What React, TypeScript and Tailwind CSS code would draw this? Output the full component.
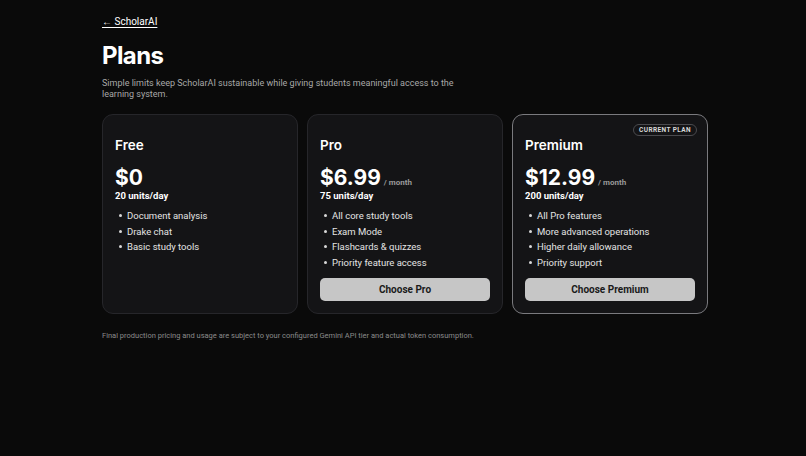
const plans = [
  {
    name: 'Free',
    price: '$0',
    period: '',
    units: '20 units/day',
    features: ['Document analysis', 'Drake chat', 'Basic study tools'],
    cta: '',
    current: false,
  },
  {
    name: 'Pro',
    price: '$6.99',
    period: '/ month',
    units: '75 units/day',
    features: ['All core study tools', 'Exam Mode', 'Flashcards & quizzes', 'Priority feature access'],
    cta: 'Choose Pro',
    current: false,
  },
  {
    name: 'Premium',
    price: '$12.99',
    period: '/ month',
    units: '200 units/day',
    features: ['All Pro features', 'More advanced operations', 'Higher daily allowance', 'Priority support'],
    cta: 'Choose Premium',
    current: true,
  },
];

function App() {
  return (
    <div className="min-h-[456px] bg-[#0a0a0a] text-white font-['Roboto',sans-serif]">
      <div className="w-[606px] ml-[102px] pt-[15px]">
        <a href="#" className="block w-fit text-[10px] leading-[13px] underline underline-offset-2">
          ← ScholarAI
        </a>
        <h1 className="mt-[13px] font-['Inter',sans-serif] text-[24px] leading-[30px] font-bold tracking-tight">Plans</h1>
        <p className="mt-[7px] w-[360px] text-[9px] leading-[11px] text-[#a8a8a8]">
          Simple limits keep ScholarAI sustainable while giving students meaningful access to the learning system.
        </p>

        <div className="mt-[14px] grid grid-cols-3 gap-[9px]">
          {plans.map((p) => (
            <div
              key={p.name}
              className={
                'relative flex flex-col h-[200px] rounded-[11px] bg-[#141416] px-[12px] pb-[12px] pt-[22px] border ' +
                (p.current ? 'border-[#7a7a7e]' : 'border-[#26262a]')
              }
            >
              {p.current && (
                <span className="absolute right-[10px] top-[9px] rounded-full border border-[#4a4a4e] px-[5px] text-[6.5px] leading-[10px] font-bold tracking-[0.06em] text-[#d8d8d8]">
                  CURRENT PLAN
                </span>
              )}
              <h2 className="font-['Inter',sans-serif] text-[13.5px] leading-[17px] font-semibold">{p.name}</h2>
              <div className="mt-[12px] flex items-baseline gap-[3px]">
                <span className="font-['Inter',sans-serif] text-[21px] leading-[24px] font-bold">{p.price}</span>
                {p.period && <span className="text-[8px] font-bold text-[#9a9a9a]">{p.period}</span>}
              </div>
              <div className="text-[9.5px] leading-[12px] font-bold">{p.units}</div>
              <ul className="mt-[6px] text-[9.5px] leading-[15.6px] text-[#e4e4e4]">
                {p.features.map((f) => (
                  <li key={f} className="flex items-center">
                    <span className="ml-[4px] mr-[5px] h-[3px] w-[3px] rounded-full bg-[#d8d8d8]" />
                    {f}
                  </li>
                ))}
              </ul>
              {p.cta && (
                <button className="mt-auto h-[23px] w-full rounded-[5px] bg-[#c6c6c6] text-[10px] font-bold text-[#1a1a1a]">
                  {p.cta}
                </button>
              )}
            </div>
          ))}
        </div>

        <p className="mt-[17px] text-[7.5px] leading-[10px] text-[#8a8a8a]">
          Final production pricing and usage are subject to your configured Gemini API tier and actual token consumption.
        </p>
      </div>
    </div>
  );
}

export default App;
